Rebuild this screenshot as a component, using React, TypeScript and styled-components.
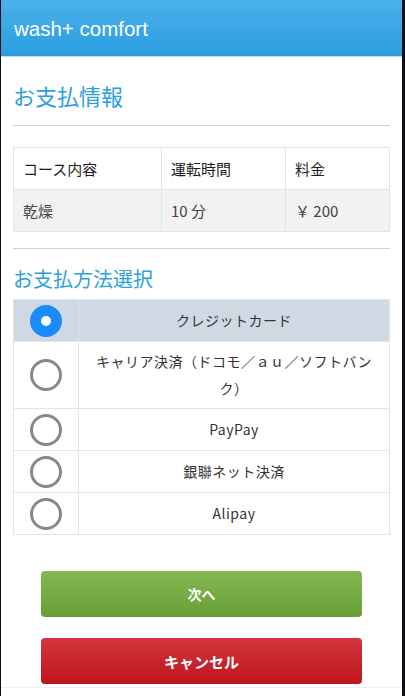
import React, { FunctionComponent } from "react";
import styled, { createGlobalStyle } from "styled-components";

const GlobalStyle = createGlobalStyle`
  html, body {
    margin: 0;
    padding: 0;
    background: #0d0f14;
  }
  body {
    font-family: "Liberation Sans", "Noto Sans CJK JP", sans-serif;
  }
`;

const Page = styled.div`
  margin: 0 3px 0 1px;
  width: 401px;
  height: 696px;
  background: #fff;
  overflow: hidden;
`;

const Header = styled.header`
  height: 57px;
  background: linear-gradient(#4bb1ea, #2a9de0);
  border-bottom: 1px solid #b9dcf3;
  display: flex;
  align-items: center;
  padding: 1px 13px 0;
  box-sizing: border-box;
  color: #fff;
  font-size: 20.5px;
`;

const Content = styled.main`
  padding: 0 12px;
`;

const Title = styled.h2<{ small?: boolean }>`
  margin: 0;
  padding: ${({ small }) => (small ? "18px 0 8px" : "25px 0 17px")};
  font-family: "Noto Sans CJK JP", sans-serif;
  font-weight: 400;
  font-size: ${({ small }) => (small ? "20px" : "22px")};
  line-height: 1.2;
  color: #2d9ee0;
`;

const Rule = styled.hr`
  margin: 0;
  border: 0;
  border-top: 1px solid #d0d0d0;
`;

const InfoTable = styled.table`
  width: 100%;
  margin: 21px 0 16px;
  border-collapse: collapse;
  font-family: "Noto Sans CJK JP", sans-serif;
  font-size: 14px;
  color: #333;
`;

const InfoCell = styled.td<{ head?: boolean; w?: string }>`
  height: 41px;
  padding: 0 9px;
  border: 1px solid #e3e3e3;
  width: ${({ w }) => w || "auto"};
  background: ${({ head }) => (head ? "#fff" : "#f2f2f2")};
  font-weight: 400;
  color: ${({ head }) => (head ? "#1e1e1e" : "#444")};
  font-size: 15px;
`;

const PayTable = styled.table`
  width: 100%;
  border-collapse: collapse;
  font-family: "Noto Sans CJK JP", sans-serif;
  font-size: 14px;
  color: #333;
`;

const PayRow = styled.tr<{ active?: boolean }>`
  background: ${({ active }) => (active ? "#cfd9e4" : "#fff")};
`;

const RadioCell = styled.td`
  width: 64px;
  height: 41px;
  padding: 0;
  border: 1px solid #e1e4e8;
  text-align: center;
  vertical-align: middle;
`;

const LabelCell = styled.td`
  padding: 6px 10px;
  border: 1px solid #e1e4e8;
  text-align: center;
  line-height: 27px;
  letter-spacing: 0.5px;
  font-size: 14px;
`;

const Radio = styled.span<{ checked?: boolean }>`
  display: inline-block;
  vertical-align: middle;
  box-sizing: border-box;
  width: 32px;
  height: 32px;
  border-radius: 50%;
  border: ${({ checked }) => (checked ? "11px solid #1a8bfb" : "3px solid #888")};
  background: #fff;
`;

const Buttons = styled.div`
  display: flex;
  flex-direction: column;
  gap: 21px;
  padding: 36px 28px 0;
`;

const Button = styled.button<{ tone: "go" | "stop" }>`
  height: 46px;
  border: 0;
  border-radius: 4px;
  background: ${({ tone }) =>
    tone === "go"
      ? "linear-gradient(#84b852, #679f35)"
      : "linear-gradient(#d3363f, #bf141c)"};
  color: #fff;
  font-family: "Noto Sans CJK JP", sans-serif;
  font-weight: 700;
  font-size: ${({ tone }) => (tone === "go" ? "14px" : "15px")};
`;

const Footer = styled.div`
  margin-top: 3px;
  border-top: 1px solid #eee;
`;

const methods = [
  "クレジットカード",
  "キャリア決済（ドコモ／ａｕ／ソフトバンク）",
  "PayPay",
  "銀聯ネット決済",
  "Alipay",
];

const App: FunctionComponent = () => (
  <>
    <GlobalStyle />
    <Page>
      <Header>wash+ comfort</Header>
      <Content>
        <Title>お支払情報</Title>
        <Rule />
        <InfoTable>
          <tbody>
            <tr>
              <InfoCell head w="129px">コース内容</InfoCell>
              <InfoCell head w="105px">運転時間</InfoCell>
              <InfoCell head>料金</InfoCell>
            </tr>
            <tr>
              <InfoCell>乾燥</InfoCell>
              <InfoCell>10 分</InfoCell>
              <InfoCell>￥ 200</InfoCell>
            </tr>
          </tbody>
        </InfoTable>
        <Rule />
        <Title small>お支払方法選択</Title>
        <PayTable>
          <tbody>
            {methods.map((m, i) => (
              <PayRow key={m} active={i === 0}>
                <RadioCell>
                  <Radio checked={i === 0} />
                </RadioCell>
                <LabelCell>{m}</LabelCell>
              </PayRow>
            ))}
          </tbody>
        </PayTable>
        <Buttons>
          <Button tone="go">次へ</Button>
          <Button tone="stop">キャンセル</Button>
        </Buttons>
      </Content>
      <Footer />
    </Page>
  </>
);

export default App;
